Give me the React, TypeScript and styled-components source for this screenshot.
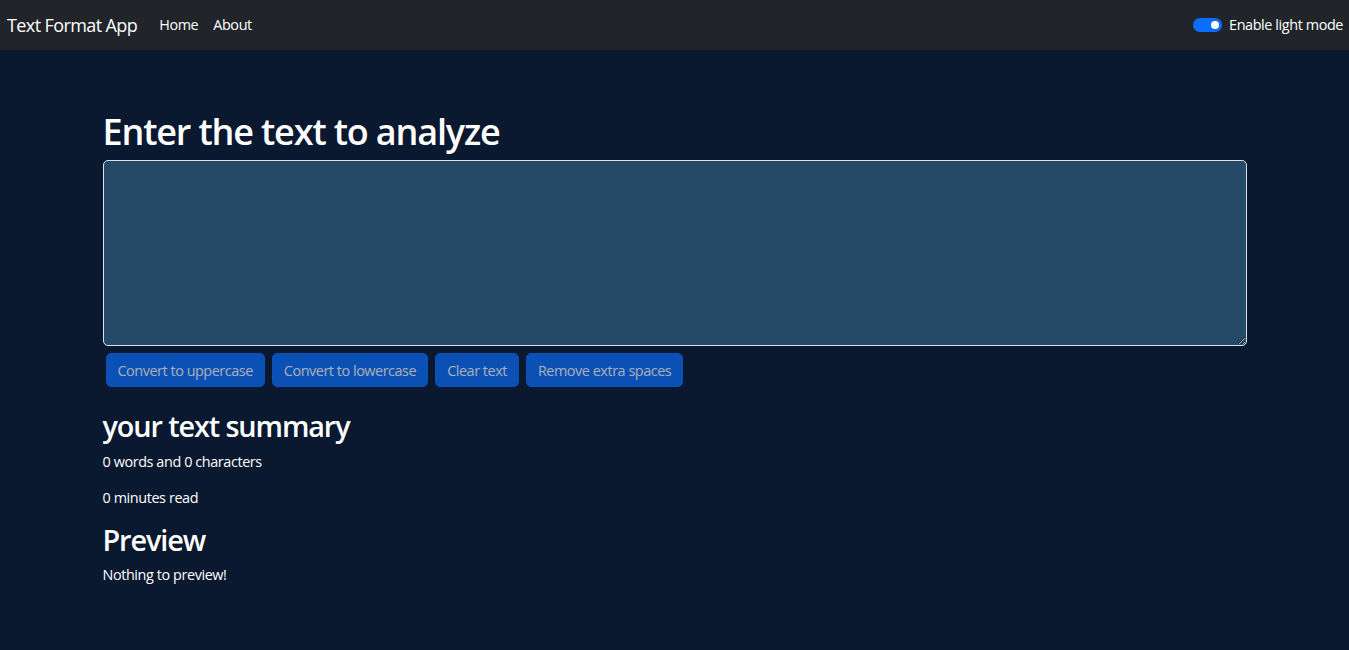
import React, { useState } from "react";
import styled, { createGlobalStyle } from "styled-components";

const GlobalStyle = createGlobalStyle`
  html, body {
    margin: 0;
    padding: 0;
  }
  body {
    background-color: #0a1830;
    color: #ffffff;
    font-family: "Open Sans", "Noto Sans", "Liberation Sans", sans-serif;
    font-size: 14.4px;
    letter-spacing: -0.4px;
    line-height: 1.5;
    height: 650px;
  }
  * {
    box-sizing: border-box;
  }
`;

const Navbar = styled.nav`
  display: flex;
  align-items: center;
  justify-content: space-between;
  height: 50px;
  padding: 0 6px 0 7px;
  background-color: #212529;
`;

const NavLeft = styled.div`
  display: flex;
  align-items: center;
`;

const Brand = styled.a`
  font-size: 18px;
  letter-spacing: -0.6px;
  color: #ffffff;
  margin-right: 22px;
  text-decoration: none;
`;

const NavLink = styled.a`
  font-size: 14.4px;
  color: #ffffff;
  margin-right: 15px;
  text-decoration: none;
  cursor: pointer;
`;

const SwitchWrap = styled.label`
  display: flex;
  align-items: center;
  gap: 7px;
  font-size: 14.4px;
  cursor: pointer;
`;

const SwitchTrack = styled.span<{ $on: boolean }>`
  position: relative;
  display: inline-block;
  width: 29px;
  height: 14px;
  border-radius: 7px;
  background-color: ${(p) => (p.$on ? "#0d6efd" : "#4a4f55")};
`;

const SwitchKnob = styled.span<{ $on: boolean }>`
  position: absolute;
  top: 3px;
  left: ${(p) => (p.$on ? "18px" : "3px")};
  width: 8px;
  height: 8px;
  border-radius: 50%;
  background-color: #ffffff;
`;

const Container = styled.main`
  width: 1144px;
  margin: 0 auto;
  padding-top: 60px;
`;

const Heading = styled.h1`
  font-size: 36px;
  font-weight: 600;
  letter-spacing: -1.15px;
  line-height: 1.2;
  margin: 0 0 7px 0;
`;

const TextArea = styled.textarea`
  display: block;
  width: 100%;
  height: 186px;
  padding: 5px 11px;
  background-color: #244a68;
  color: #ffffff;
  border: 1px solid #dee2e6;
  border-radius: 5px;
  font-family: inherit;
  font-size: 14.4px;
  outline: none;
`;

const ButtonRow = styled.div`
  display: flex;
  gap: 7px;
  margin-top: 7px;
  padding-left: 3px;
`;

const ActionButton = styled.button`
  height: 34px;
  padding: 0 11px;
  background-color: #0d6efd;
  color: #ffffff;
  border: 1px solid #0d6efd;
  border-radius: 5px;
  font-family: inherit;
  font-size: 14.4px;
  letter-spacing: -0.45px;
  opacity: 0.65;
  &:disabled {
    cursor: default;
  }
`;

const Summary = styled.section`
  margin-top: 22px;
`;

const SubHeading = styled.h2`
  font-size: 28.8px;
  font-weight: 600;
  letter-spacing: -1.1px;
  line-height: 1.2;
  margin: 0 0 7px 0;
`;

const Para = styled.p`
  margin: 0 0 14.4px 0;
`;

export default function App() {
  const [text, setText] = useState("");
  const [light, setLight] = useState(false);

  const words = text.split(/\s+/).filter((w) => w.length > 0).length;
  const empty = text.length === 0;

  return (
    <>
      <GlobalStyle />
      <Navbar>
        <NavLeft>
          <Brand>Text Format App</Brand>
          <NavLink>Home</NavLink>
          <NavLink>About</NavLink>
        </NavLeft>
        <SwitchWrap onClick={() => setLight(!light)}>
          <SwitchTrack $on={!light}>
            <SwitchKnob $on={!light} />
          </SwitchTrack>
          Enable light mode
        </SwitchWrap>
      </Navbar>
      <Container>
        <Heading>Enter the text to analyze</Heading>
        <TextArea value={text} onChange={(e) => setText(e.target.value)} />
        <ButtonRow>
          <ActionButton disabled={empty} onClick={() => setText(text.toUpperCase())}>
            Convert to uppercase
          </ActionButton>
          <ActionButton disabled={empty} onClick={() => setText(text.toLowerCase())}>
            Convert to lowercase
          </ActionButton>
          <ActionButton disabled={empty} onClick={() => setText("")}>
            Clear text
          </ActionButton>
          <ActionButton disabled={empty} onClick={() => setText(text.split(/[ ]+/).join(" "))}>
            Remove extra spaces
          </ActionButton>
        </ButtonRow>
        <Summary>
          <SubHeading>your text summary</SubHeading>
          <Para>
            {words} words and {text.length} characters
          </Para>
          <Para>{0.008 * words} minutes read</Para>
          <SubHeading>Preview</SubHeading>
          <Para>{empty ? "Nothing to preview!" : text}</Para>
        </Summary>
      </Container>
    </>
  );
}
